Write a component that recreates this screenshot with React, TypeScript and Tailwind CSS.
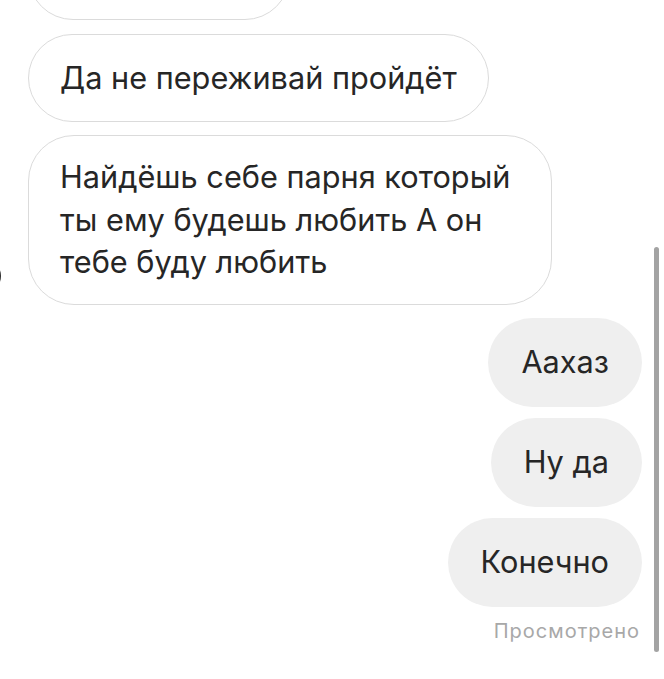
import React from "react";

const font = { fontFamily: 'Inter, "Liberation Sans", Arial, sans-serif' };

function Left({ children, className = "" }: { children?: React.ReactNode; className?: string }) {
  return (
    <div
      className={`self-start whitespace-nowrap border-[1.5px] border-[#dbdbdb] bg-white text-[#262626] text-[30.7px] leading-[42.5px] px-[31px] ${className}`}
    >
      {children}
    </div>
  );
}

function Right({ children, className = "" }: { children: React.ReactNode; className?: string }) {
  return (
    <div
      className={`self-end whitespace-nowrap rounded-full bg-[#efefef] text-[#262626] text-[30.7px] leading-[42px] px-[33px] py-[23.5px] ${className}`}
    >
      {children}
    </div>
  );
}

export default function App() {
  return (
    <div className="relative w-[664px] h-[679px] overflow-hidden bg-white" style={font}>
      <div className="flex flex-col pl-[28px] pr-[22px] mt-[-70px]">
        <Left className="rounded-full h-[89.5px] w-[262px]" />
        <Left className="rounded-full py-[22px] mt-[14px]">Да не переживай пройдёт</Left>
        <div className="relative mt-[13px] flex items-end">
          <div className="absolute left-[-61px] bottom-[13px] w-[34px] h-[32px] rounded-full bg-[radial-gradient(circle_at_70%_50%,#3a3a3a,#1a1a1a)]" />
          <Left className="rounded-[46px] py-[20px] w-[524px]">
            Найдёшь себе парня который
            <br />
            ты ему будешь любить А он
            <br />
            тебе буду любить
          </Left>
        </div>
        <Right className="mt-[13px]">Аахаз</Right>
        <Right className="mt-[11px]">Ну да</Right>
        <Right className="mt-[11px]">Конечно</Right>
        <div className="self-end mt-[12px] text-[20px] leading-[24px] tracking-[1px] text-[#a8a8a8] pr-[2px]">
          Просмотрено
        </div>
      </div>
      <div className="absolute left-[654px] top-[247px] w-[5px] h-[405px] rounded-full bg-[#a3a3a3]" />
    </div>
  );
}
